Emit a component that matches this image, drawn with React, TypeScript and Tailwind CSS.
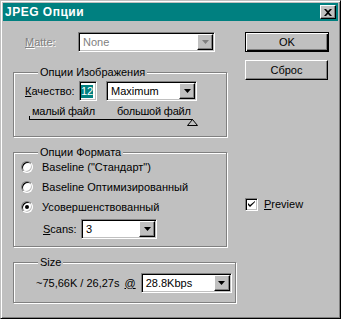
import React from 'react';

const raised =
  'border border-t-white border-l-white border-r-black border-b-black shadow-[inset_-1px_-1px_#808080]';
const sunken =
  'border border-t-[#808080] border-l-[#808080] border-r-white border-b-white shadow-[inset_1px_1px_#000,inset_-1px_-1px_#c0c0c0]';
const etched = 'border border-[#808080] shadow-[inset_1px_1px_#fff,1px_1px_#fff]';

function Arrow({ disabled }: { disabled?: boolean }) {
  return (
    <svg width="7" height="4" viewBox="0 0 7 4">
      <path d="M0 0h7L3.5 4z" fill={disabled ? '#808080' : '#000'} />
    </svg>
  );
}

function Combo({
  value,
  className,
  disabled,
}: {
  value: string;
  className: string;
  disabled?: boolean;
}) {
  return (
    <div className={`flex h-[20px] bg-white ${sunken} ${className}`}>
      <div
        className={`flex flex-1 items-center pl-[4px] ${
          disabled ? 'text-[#808080]' : 'text-black'
        }`}
      >
        {value}
      </div>
      <div className={`m-[1px] flex w-[16px] items-center justify-center bg-[#c0c0c0] ${raised}`}>
        <Arrow disabled={disabled} />
      </div>
    </div>
  );
}

function Group({
  label,
  className,
  children,
}: {
  label: string;
  className: string;
  children: React.ReactNode;
}) {
  return (
    <div className={`relative ${etched} ${className}`}>
      <span className="absolute left-[24px] top-[-8px] bg-[#c0c0c0] px-[2px] leading-[14px]">
        {label}
      </span>
      {children}
    </div>
  );
}

function Radio({ label, checked }: { label: string; checked?: boolean }) {
  return (
    <div className="flex h-[20px] items-center">
      <span className="ml-[7px] flex h-[12px] w-[12px] items-center justify-center rounded-full border border-t-[#808080] border-l-[#808080] border-r-white border-b-white bg-white shadow-[inset_1px_1px_#000,inset_-1px_-1px_#c0c0c0]">
        {checked && <span className="h-[4px] w-[4px] rounded-full bg-black" />}
      </span>
      <span className="ml-[9px]">{label}</span>
    </div>
  );
}

export default function App() {
  return (
    <div className="h-[319px] w-[341px] border border-t-[#c0c0c0] border-l-[#c0c0c0] border-r-black border-b-black bg-[#c0c0c0] p-[2px] font-['Liberation_Sans',Arial,sans-serif] text-[11px] leading-[13px] text-black shadow-[inset_1px_1px_#fff,inset_-1px_-1px_#808080]">
      <div className="flex h-[18px] items-center justify-between bg-[#008080] pl-[2px] pr-[2px]">
        <span className="text-[12px] font-bold tracking-[0.5px] text-white">JPEG Опции</span>
        <div className={`flex h-[14px] w-[16px] items-center justify-center bg-[#c0c0c0] ${raised}`}>
          <svg width="8" height="7" viewBox="0 0 8 7">
            <path d="M0 0h2l2 2 2-2h2L5 3.5 8 7H6L4 5 2 7H0l3-3.5z" fill="#000" />
          </svg>
        </div>
      </div>

      <div className="flex pl-[10px]">
        <div className="w-[224px]">
          <div className="mt-[11px] flex h-[20px] items-center">
            <span className="w-[65px] pl-[12px] text-[#808080] [text-shadow:1px_1px_0_#fff]">
              <u>M</u>atte:
            </span>
            <Combo value="None" className="w-[137px]" disabled />
          </div>

          <Group label="Опции Изображения" className="mt-[20px] h-[65px] w-[214px]">
            <div className="pt-[8px]">
              <div className="flex h-[20px] items-center">
                <span className="w-[65px] pl-[11px]">
                  <u>К</u>ачество:
                </span>
                <div className={`flex h-[20px] w-[18px] items-center bg-white pl-[1px] ${sunken}`}>
                  <span className="bg-[#008080] text-white">12</span>
                </div>
                <Combo value="Maximum" className="ml-[9px] w-[91px]" />
              </div>
              <div className="mt-[4px] flex h-[13px] tracking-[-0.2px]">
                <span className="ml-[18px]">малый файл</span>
                <span className="ml-[22px]">большой файл</span>
              </div>
              <div className="relative ml-[15px] mt-[1px] h-[1px] w-[164px] bg-black">
                <span className="absolute bottom-0 left-0 h-[4px] w-[1px] bg-black" />
                <svg className="absolute left-[158px] top-0" width="11" height="7" viewBox="0 0 11 7">
                  <path d="M5.5 0.5L0.5 6.5h10z" fill="#c0c0c0" stroke="#000" strokeWidth="1" />
                </svg>
              </div>
            </div>
          </Group>

          <Group label="Опции Формата" className="mt-[15px] h-[95px] w-[214px]">
            <div className="pt-[4px]">
              <Radio label='Baseline ("Стандарт")' />
              <Radio label="Baseline Оптимизированный" />
              <Radio label="Усовершенствованный" checked />
              <div className="mt-[2px] flex h-[20px] items-center">
                <span className="ml-[29px] w-[38px]">
                  <u>S</u>cans:
                </span>
                <Combo value="3" className="w-[76px]" />
              </div>
            </div>
          </Group>

          <Group label="Size" className="mt-[15px] h-[41px] w-[223px]">
            <div className="mt-[10px] flex h-[20px] items-center">
              <span className="ml-[22px]">~75,66K / 26,27s</span>
              <u className="ml-[5px]">@</u>
              <Combo value="28.8Kbps" className="ml-[5px] w-[91px]" />
            </div>
          </Group>
        </div>

        <div className="ml-[8px] w-[84px]">
          <button className="mt-[11px] flex h-[20px] w-[84px] items-center justify-center border border-black bg-[#c0c0c0] shadow-[inset_1px_1px_#fff,inset_-1px_-1px_#000,inset_-2px_-2px_#808080]">
            OK
          </button>
          <button className={`mt-[8px] flex h-[20px] w-[83px] items-center justify-center bg-[#c0c0c0] ${raised}`}>
            Сброс
          </button>
          <div className="mt-[118px] flex h-[13px] items-center">
            <span className={`flex h-[13px] w-[13px] items-center justify-center bg-white ${sunken}`}>
              <svg width="7" height="7" viewBox="0 0 7 7">
                <path d="M0 2v2l2 2 5-5V0L2 4z" fill="#000" />
              </svg>
            </span>
            <span className="ml-[6px]">
              <u>P</u>review
            </span>
          </div>
        </div>
      </div>
    </div>
  );
}
